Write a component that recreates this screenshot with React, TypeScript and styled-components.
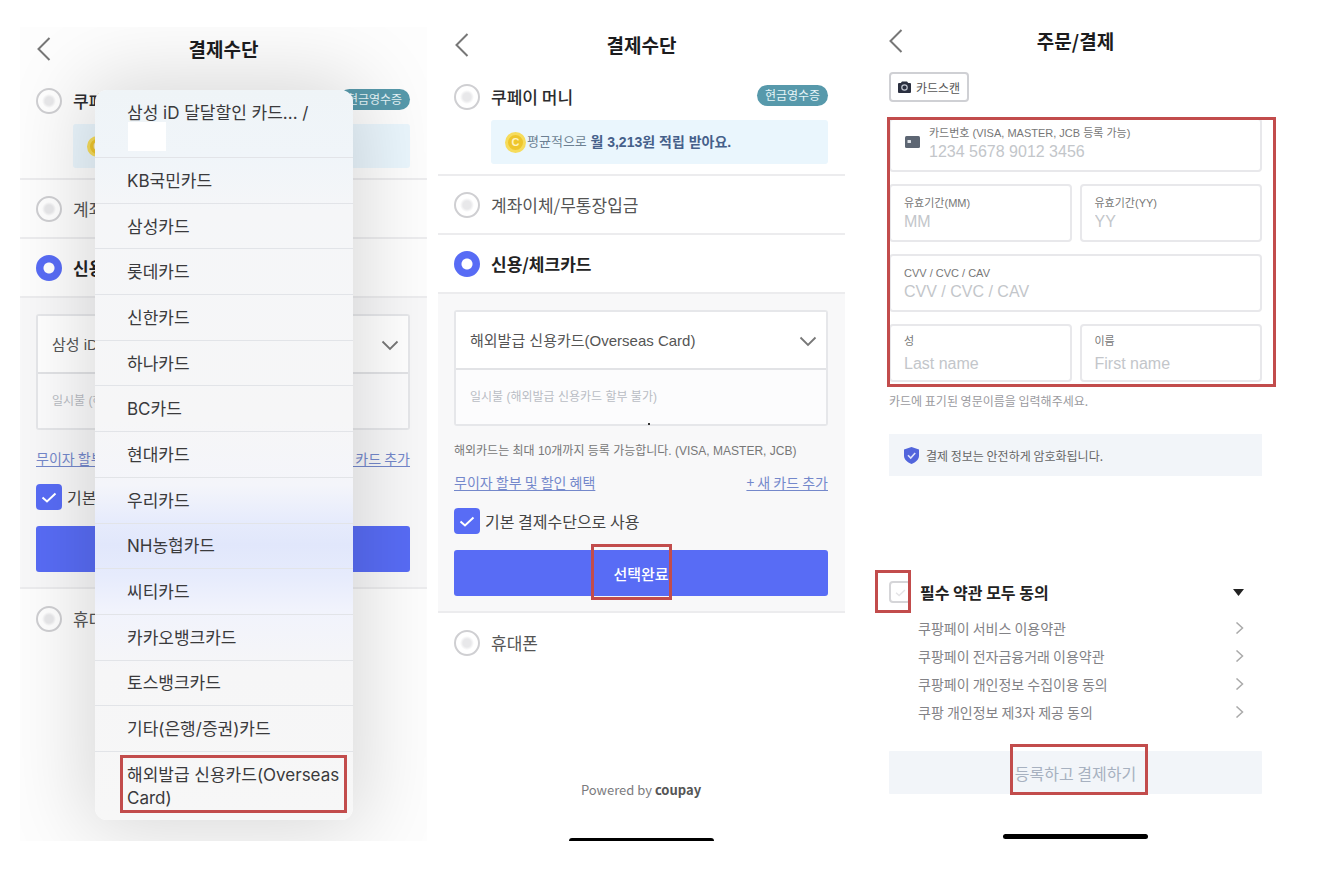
import React from "react";
import styled, { createGlobalStyle, css } from "styled-components";

const KR = `"Noto Sans CJK KR", sans-serif`;
const LIGHT = `"Liberation Sans", "Noto Sans CJK KR", sans-serif`;
const IOS = `Inter, "Noto Sans CJK KR", sans-serif`;
const BLUE = "#586cf5";
const RED = "#c24c4c";

const GlobalStyle = createGlobalStyle`
  * { box-sizing: border-box; }
  body { margin: 0; background: #fff; font-family: ${KR}; color: #222; }
  button, input, select { font: inherit; color: inherit; margin: 0; }
  ul { list-style: none; margin: 0; padding: 0; }
`;

const Page = styled.main`
  display: flex;
  min-height: 100vh;
  padding: 0 41px 30px 20px;
`;

const Phone = styled.section<{ $top: number; $left?: number; $tint?: string }>`
  position: relative;
  flex: 1 1 0;
  min-width: 0;
  display: flex;
  flex-direction: column;
  overflow: hidden;
  margin: ${(p) => p.$top}px 0 0 ${(p) => p.$left ?? 0}px;
  background: ${(p) => p.$tint ?? "#fff"};
`;

const Header = styled.header`
  display: grid;
  grid-template-columns: 40px 1fr 40px;
  align-items: center;
  height: 44px;
`;

const BackButton = styled.button`
  display: flex;
  align-items: center;
  height: 44px;
  padding: 0 0 0 16px;
  border: 0;
  background: none;
  color: #777;
`;

const Title = styled.h1`
  margin: 0;
  text-align: center;
  font-size: 19px;
  line-height: 28px;
  font-weight: 700;
  color: #1c1c1e;
`;

const OptionBlock = styled.div`
  padding: 17px 17px 10px 16px;
  border-bottom: 2px solid #ececee;
`;

const OptionHead = styled.div`
  display: flex;
  align-items: center;
  justify-content: space-between;
`;

const OptionLabel = styled.label<{ $tone?: "bold" | "medium" | "plain" }>`
  display: flex;
  align-items: center;
  gap: 11px;
  font-size: 17px;
  line-height: 26px;
  ${(p) =>
    p.$tone === "bold"
      ? css`font-weight: 700; color: #222;`
      : p.$tone === "medium"
      ? css`font-weight: 500; color: #2c2c2e;`
      : css`font-weight: 400; color: #555;`}
`;

const OptionRow = styled.div<{ $last?: boolean }>`
  display: flex;
  align-items: center;
  height: 59px;
  padding: 0 16px;
  border-bottom: ${(p) => (p.$last ? "0" : "2px solid #ececee")};
`;

const Radio = styled.input.attrs({ type: "radio" })`
  appearance: none;
  flex: none;
  width: 26px;
  height: 26px;
  border: 2px solid #cfcfd2;
  border-radius: 50%;
  background: radial-gradient(circle, #e8e8ea 4px, #fff 7px);
  &:checked {
    border-color: ${BLUE};
    background: radial-gradient(circle, #fff 5px, ${BLUE} 6px);
  }
`;

const Badge = styled.span`
  width: 71px;
  height: 21px;
  margin-bottom: 3px;
  border-radius: 11px;
  background: #5799ab;
  color: #e6f5f8;
  font-size: 12px;
  line-height: 20px;
  text-align: center;
`;

const Reward = styled.p`
  display: flex;
  align-items: center;
  height: 44px;
  margin: 10px 0 0 37px;
  padding-left: 14px;
  border-radius: 3px;
  background: #eaf6fd;
  font-family: ${LIGHT};
  font-size: 13px;
  line-height: 20px;
  color: #6c7f92;
  white-space: pre;
  strong { color: #45608a; font-size: 14px; font-weight: 700; }
`;

const Coin = styled.span`
  width: 21px;
  height: 21px;
  margin-right: 1px;
  border: 3px solid #f6dc5c;
  border-radius: 50%;
  background: #eec62c;
  color: #fff3c0;
  font-size: 11px;
  line-height: 15px;
  font-weight: 700;
  text-align: center;
`;

const CardPanel = styled.div`
  display: flex;
  flex-direction: column;
  padding: 16px 17px 15px 16px;
  border-bottom: 2px solid #ececee;
  background: #f8f8f9;
`;

const SelectGroup = styled.div<{ $dot?: boolean }>`
  position: relative;
  margin-bottom: 11px;
  border: 2px solid #e6e7ea;
  border-radius: 3px;
  background: #fff;
  ${(p) =>
    p.$dot &&
    css`
      &::after {
        content: "";
        position: absolute;
        left: 52%;
        bottom: -1px;
        width: 2px;
        height: 2px;
        background: #333;
      }
    `}
`;

const SelectRow = styled.div<{ $muted?: boolean }>`
  position: relative;
  height: ${(p) => (p.$muted ? 54 : 58)}px;
  border-bottom: ${(p) => (p.$muted ? "0" : "2px solid #e2e3e6")};
  background: ${(p) => (p.$muted ? "#fcfcfd" : "#fff")};
  svg { position: absolute; right: 9px; top: 24px; pointer-events: none; }
`;

const Select = styled.select<{ $muted?: boolean }>`
  appearance: none;
  width: 100%;
  height: 100%;
  padding: 0 32px 0 14px;
  border: 0;
  background: transparent;
  opacity: 1;
  font-family: ${LIGHT};
  font-size: ${(p) => (p.$muted ? 12 : 15)}px;
  color: ${(p) => (p.$muted ? "#b9bcc4" : "#555")};
`;

const Notice = styled.p`
  margin: 0;
  font-family: ${LIGHT};
  font-size: 12px;
  line-height: 28px;
  color: #777;
  white-space: nowrap;
`;

const Links = styled.div`
  display: flex;
  justify-content: space-between;
  margin: 7px 0 16px;
  font-size: 14px;
  line-height: 20px;
  a { color: #7488cb; text-underline-offset: 2px; }
`;

const CheckLabel = styled.label`
  display: flex;
  align-items: center;
  gap: 5px;
  margin-bottom: 16px;
  font-size: 16px;
  line-height: 26px;
  color: #444;
`;

const CheckBoxWrap = styled.span<{ $size: number }>`
  position: relative;
  display: grid;
  flex: none;
  width: ${(p) => p.$size}px;
  height: ${(p) => p.$size}px;
  svg { grid-area: 1 / 1; place-self: center; pointer-events: none; z-index: 1; }
`;

const CheckBox = styled.input.attrs({ type: "checkbox" })`
  grid-area: 1 / 1;
  appearance: none;
  border: 2px solid #d5d5d8;
  border-radius: 4px;
  background: #fff;
  &:checked { border-color: ${BLUE}; background: ${BLUE}; }
`;

const Frame = styled.span<{ $inset: string; $width?: number }>`
  position: absolute;
  inset: ${(p) => p.$inset};
  width: ${(p) => (p.$width ? `${p.$width}px` : "auto")};
  border: 3px solid ${RED};
  pointer-events: none;
  z-index: 2;
`;

const Button = styled.button<{ $pale?: boolean }>`
  position: relative;
  display: block;
  width: 100%;
  height: ${(p) => (p.$pale ? 43 : 46)}px;
  padding: 0;
  border: 0;
  border-radius: ${(p) => (p.$pale ? 1 : 3)}px;
  background: ${(p) => (p.$pale ? "#f2f5f9" : BLUE)};
  color: ${(p) => (p.$pale ? "#a7b1c0" : "#fff")};
  font-size: ${(p) => (p.$pale ? 16 : 15)}px;
  font-weight: ${(p) => (p.$pale ? 400 : 500)};
`;

const Footer = styled.footer`
  margin: auto 0 38px;
  padding-right: 1px;
  text-align: center;
  font-size: 13px;
  line-height: 20px;
  color: #7b7b7e;
  strong { color: #555; font-weight: 700; }
`;

const HomeBar = styled.div<{ $cut?: boolean }>`
  align-self: center;
  flex: none;
  width: 145px;
  height: ${(p) => (p.$cut ? 3 : 5)}px;
  margin: ${(p) => (p.$cut ? "0" : "auto 0 2px")};
  border-radius: ${(p) => (p.$cut ? "3px 3px 0 0" : "3px")};
  background: #000;
`;

const Menu = styled.ul`
  position: absolute;
  top: 63px;
  right: 74px;
  bottom: 21px;
  left: 75px;
  display: flex;
  flex-direction: column;
  border-radius: 12px;
  background: linear-gradient(
    #eff4f7 0, #f0f5f9 66px, #f5f6f8 120px, #f6f6f7 330px, #f4f5fa 395px,
    #e6ebfc 432px, #e1e7fb 455px, #e6ebfc 485px, #f1f3fc 520px, #f6f6f7 580px, #f7f7f7 100%
  );
  box-shadow: 0 0 80px 10px rgba(0, 0, 0, 0.15);
`;

const MenuItem = styled.li<{ $tall?: boolean }>`
  position: relative;
  display: flex;
  flex: ${(p) => (p.$tall ? "0 0 68px" : "1 1 45px")};
  border-bottom: 1px solid #e2e4e8;
  &:last-child { border-bottom: 0; }
`;

const MenuButton = styled.button`
  width: 100%;
  padding: 2px 12px 0 32px;
  border: 0;
  background: none;
  text-align: left;
  font-family: ${IOS};
  font-size: 17px;
  line-height: 23px;
  color: #3a3a3c;
`;

const Redaction = styled.span`
  position: absolute;
  left: 33px;
  top: 32px;
  width: 38px;
  height: 29px;
  background: #fff;
`;

const Body = styled.div`
  display: flex;
  flex-direction: column;
  padding: 9px 17px 0;
`;

const ScanButton = styled.button`
  display: flex;
  align-items: center;
  align-self: flex-start;
  gap: 5px;
  width: 80px;
  height: 30px;
  padding: 0 0 0 7px;
  border: 2px solid #cfd0d4;
  border-radius: 4px;
  background: #fff;
  font-size: 12px;
  color: #555;
  white-space: nowrap;
`;

const CardForm = styled.div`
  position: relative;
  display: grid;
  grid-template-columns: 1fr 1fr;
  gap: 12px 8px;
  margin-top: 16px;
`;

const Field = styled.label<{ $wide?: boolean; $icon?: boolean; $spread?: boolean }>`
  grid-column: ${(p) => (p.$wide ? "1 / -1" : "auto")};
  position: relative;
  display: flex;
  flex-direction: column;
  justify-content: center;
  height: ${(p) => (p.$icon ? 54 : 58)}px;
  padding: ${(p) => (p.$icon ? "0 13px 5px 38px" : "0 13px")};
  border: 2px solid #e8e8eb;
  border-radius: 4px;
  background: #fff;
  font-family: ${LIGHT};
  font-size: 11px;
  line-height: 18px;
  color: #777;
  white-space: nowrap;
  gap: ${(p) => (p.$spread ? 4 : 0)}px;
  svg { position: absolute; left: 14px; top: 16px; }
  input {
    width: 100%;
    height: 20px;
    padding: 0;
    border: 0;
    outline: 0;
    background: none;
    font-size: 16px;
    line-height: 20px;
  }
  input::placeholder { color: #c3c6ca; opacity: 1; }
`;

const Hint = styled.p`
  margin: 9px 0 0;
  font-size: 12px;
  line-height: 20px;
  color: #9a9a9e;
`;

const Secure = styled.p`
  display: flex;
  align-items: center;
  gap: 7px;
  height: 42px;
  margin: 23px 0 0;
  padding-left: 15px;
  background: #f2f5f9;
  font-size: 12px;
  color: #666;
`;

const TermsHead = styled.div`
  display: flex;
  align-items: center;
  justify-content: space-between;
  height: 22px;
  margin: 105px 0 11px;
  padding-right: 18px;
`;

const TermsLabel = styled.label`
  display: flex;
  align-items: center;
  gap: 9px;
  font-size: 16px;
  line-height: 22px;
  font-weight: 700;
  color: #222;
`;

const TermsLink = styled.a`
  display: flex;
  align-items: center;
  justify-content: space-between;
  height: 28px;
  padding: 0 18px 0 29px;
  font-size: 14px;
  color: #828286;
  text-decoration: none;
`;

const Toggle = styled.button`
  display: flex;
  padding: 0;
  border: 0;
  background: none;
`;

const SubmitArea = styled.div`
  padding-top: 25px;
`;

const TermsMark = styled.div`
  position: relative;
`;

const BackIcon = () => (
  <svg width="15" height="24" viewBox="0 0 15 24" fill="none" stroke="currentColor" strokeWidth="2">
    <path d="M13.5 1 2.5 12l11 11" />
  </svg>
);

const DownIcon = () => (
  <svg width="18" height="12" viewBox="0 0 18 12" fill="none" stroke="#777" strokeWidth="1.8">
    <path d="M1.500 1.500 9 9l7.500-7.500" />
  </svg>
);

const RightIcon = () => (
  <svg width="9" height="12" viewBox="0 0 9 12" fill="none" stroke="#aaa" strokeWidth="1.5">
    <path d="M1.500 .5 7.500 6l-6 5.500" />
  </svg>
);

const CheckIcon = ({ color, size }: { color: string; size: number }) => (
  <svg width={size} height={size} viewBox="0 0 16 16" fill="none" stroke={color} strokeWidth="2">
    <path d="M1.500 8.500 6 12.500l8.500-8" />
  </svg>
);

const CameraIcon = () => (
  <svg width="13" height="12" viewBox="0 0 13 12">
    <path d="M4 .5h5l1.200 1.500H12a1 1 0 0 1 1 1V11a1 1 0 0 1-1 1H1a1 1 0 0 1-1-1V3a1 1 0 0 1 1-1h1.800z" fill="#2b3040" />
    <circle cx="6.500" cy="6.500" r="2.700" fill="none" stroke="#c5cad4" strokeWidth="1.200" />
  </svg>
);

const CardIcon = () => (
  <svg width="15" height="12" viewBox="0 0 15 12">
    <rect width="15" height="12" rx="1.500" fill="#5d6673" />
    <rect x="2.500" y="4" width="3.500" height="3" rx=".5" fill="#dfe3e8" />
  </svg>
);

const ShieldIcon = () => (
  <svg width="15" height="17" viewBox="0 0 15 17">
    <path d="M7.500 0 15 2.500v6c0 4-3 6.800-7.500 8.500C3 15.300 0 12.500 0 8.500v-6z" fill="#5265dc" />
    <path d="M4 8.200 6.700 11l4.500-5" fill="none" stroke="#dfe4fb" strokeWidth="1.600" />
  </svg>
);

const menuCards = [
  "KB국민카드",
  "삼성카드",
  "롯데카드",
  "신한카드",
  "하나카드",
  "BC카드",
  "현대카드",
  "우리카드",
  "NH농협카드",
  "씨티카드",
  "카카오뱅크카드",
  "토스뱅크카드",
  "기타(은행/증권)카드",
];

const terms = [
  "쿠팡페이 서비스 이용약관",
  "쿠팡페이 전자금융거래 이용약관",
  "쿠팡페이 개인정보 수집이용 동의",
  "쿠팡 개인정보 제3자 제공 동의",
];

const ScreenHeader = ({ title }: { title: string }) => (
  <Header>
    <BackButton type="button" aria-label="뒤로">
      <BackIcon />
    </BackButton>
    <Title>{title}</Title>
  </Header>
);

interface PaymentProps {
  id: string;
  card: string;
  notice?: string;
  marked?: boolean;
}

const PaymentMethods = ({ id, card, notice, marked }: PaymentProps) => (
  <>
    <ScreenHeader title="결제수단" />
    <OptionBlock>
      <OptionHead>
        <OptionLabel $tone="medium">
          <Radio name={id} />
          쿠페이 머니
        </OptionLabel>
        <Badge>현금영수증</Badge>
      </OptionHead>
      <Reward>
        <Coin>C</Coin>
        {"평균적으로 "}
        <strong>월 3,213원 적립 받아요.</strong>
      </Reward>
    </OptionBlock>
    <OptionRow>
      <OptionLabel>
        <Radio name={id} />
        계좌이체/무통장입금
      </OptionLabel>
    </OptionRow>
    <OptionRow>
      <OptionLabel $tone="bold">
        <Radio name={id} defaultChecked />
        신용/체크카드
      </OptionLabel>
    </OptionRow>
    <CardPanel>
      <SelectGroup $dot={marked}>
        <SelectRow>
          <Select aria-label="카드 선택">
            <option>{card}</option>
          </Select>
          <DownIcon />
        </SelectRow>
        <SelectRow $muted>
          <Select $muted disabled aria-label="할부 선택">
            <option>일시불 (해외발급 신용카드 할부 불가)</option>
          </Select>
        </SelectRow>
      </SelectGroup>
      {notice && <Notice>{notice}</Notice>}
      <Links>
        <a href="#benefits">무이자 할부 및 할인 혜택</a>
        <a href="#new-card">+ 새 카드 추가</a>
      </Links>
      <CheckLabel>
        <CheckBoxWrap $size={26}>
          <CheckBox defaultChecked />
          <CheckIcon color="#fff" size={16} />
        </CheckBoxWrap>
        기본 결제수단으로 사용
      </CheckLabel>
      <Button type="button">
        선택완료
        {marked && <Frame $inset="-6px auto -4px calc(50% - 50px)" $width={81} />}
      </Button>
    </CardPanel>
    <OptionRow $last>
      <OptionLabel>
        <Radio name={id} />
        휴대폰
      </OptionLabel>
    </OptionRow>
  </>
);

export default function App() {
  return (
    <>
      <GlobalStyle />
      <Page>
        <Phone $top={27} $tint="#fdfdfd">
          <PaymentMethods id="method-list" card="삼성 iD 달달할인 카드" />
          <Menu>
            <MenuItem $tall>
              <MenuButton type="button">
                삼성 iD 달달할인 카드... /<br />
                &nbsp;
              </MenuButton>
              <Redaction />
            </MenuItem>
            {menuCards.map((name) => (
              <MenuItem key={name}>
                <MenuButton type="button">{name}</MenuButton>
              </MenuItem>
            ))}
            <MenuItem $tall>
              <MenuButton type="button">해외발급 신용카드(Overseas Card)</MenuButton>
              <Frame $inset="3px 6px 7px 25px" />
            </MenuItem>
          </Menu>
        </Phone>

        <Phone $top={23} $left={11}>
          <PaymentMethods
            id="method-overseas"
            card="해외발급 신용카드(Overseas Card)"
            notice="해외카드는 최대 10개까지 등록 가능합니다. (VISA, MASTER, JCB)"
            marked
          />
          <Footer>
            Powered by <strong>coupay</strong>
          </Footer>
          <HomeBar $cut />
        </Phone>

        <Phone $top={19} $left={27}>
          <ScreenHeader title="주문/결제" />
          <Body>
            <ScanButton type="button">
              <CameraIcon />
              카드스캔
            </ScanButton>
            <CardForm>
              <Field $wide $icon>
                <CardIcon />
                카드번호 (VISA, MASTER, JCB 등록 가능)
                <input placeholder="1234 5678 9012 3456" />
              </Field>
              <Field>
                유효기간(MM)
                <input placeholder="MM" />
              </Field>
              <Field>
                유효기간(YY)
                <input placeholder="YY" />
              </Field>
              <Field $wide>
                CVV / CVC / CAV
                <input placeholder="CVV / CVC / CAV" />
              </Field>
              <Field $spread>
                성
                <input placeholder="Last name" />
              </Field>
              <Field $spread>
                이름
                <input placeholder="First name" />
              </Field>
              <Frame $inset="-1px -14px -5px -2px" />
            </CardForm>
            <Hint>카드에 표기된 영문이름을 입력해주세요.</Hint>
            <Secure>
              <ShieldIcon />
              결제 정보는 안전하게 암호화됩니다.
            </Secure>
            <TermsMark>
              <TermsHead>
                <TermsLabel>
                  <CheckBoxWrap $size={22}>
                    <CheckBox />
                    <CheckIcon color="#e4e4e6" size={11} />
                    <Frame $inset="-11px 0 -10px -14px" />
                  </CheckBoxWrap>
                  필수 약관 모두 동의
                </TermsLabel>
                <Toggle type="button" aria-label="약관 접기">
                  <svg width="11" height="7" viewBox="0 0 11 7">
                    <path d="M0 0h11L5.500 7z" fill="#222" />
                  </svg>
                </Toggle>
              </TermsHead>
            </TermsMark>
            <ul>
              {terms.map((term) => (
                <li key={term}>
                  <TermsLink href="#terms">
                    {term}
                    <RightIcon />
                  </TermsLink>
                </li>
              ))}
            </ul>
            <SubmitArea>
              <Button type="button" $pale>
                등록하고 결제하기
                <Frame $inset="-7px auto -1px calc(50% - 66px)" $width={138} />
              </Button>
            </SubmitArea>
          </Body>
          <HomeBar />
        </Phone>
      </Page>
    </>
  );
}
